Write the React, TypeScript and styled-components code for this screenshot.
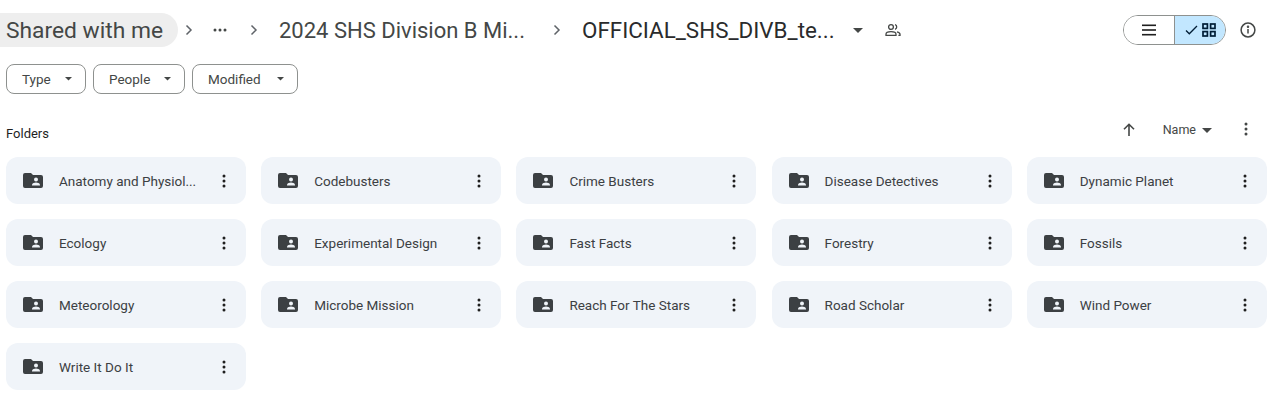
import React from "react";
import styled, { createGlobalStyle } from "styled-components";

const Global = createGlobalStyle`
  html, body { margin: 0; padding: 0; background: #fff; }
  body { font-family: Roboto, "Liberation Sans", sans-serif; overflow: hidden; }
`;

const Page = styled.div`
  width: 1280px;
  height: 414px;
  padding: 13px 13px 0 6px;
  box-sizing: border-box;
  display: flex;
  flex-direction: column;
`;

const Header = styled.div`
  display: flex;
  align-items: center;
  height: 34px;
`;

const Crumb = styled.div<{ $w: number; $size: number; $dark?: boolean; $ml?: number }>`
  width: ${(p) => p.$w}px;
  margin-left: ${(p) => p.$ml ?? 0}px;
  font-size: ${(p) => p.$size}px;
  line-height: 35px;
  height: 34px;
  white-space: nowrap;
  color: ${(p) => (p.$dark ? "#2a2b2c" : "#444746")};
`;

const RootCrumb = styled.div`
  margin-left: -6px;
  width: 178px;
  height: 34px;
  box-sizing: border-box;
  padding-left: 6px;
  border-radius: 0 17px 17px 0;
  background: #eeeeee;
  font-size: 22.8px;
  line-height: 35px;
  color: #444746;
  white-space: nowrap;
`;

const IconSlot = styled.span<{ $ml: number }>`
  display: inline-flex;
  margin-left: ${(p) => p.$ml}px;
  color: #444746;
`;

const ChevronSlot = styled(IconSlot)`
  color: #5f6368;
`;

const Toggle = styled.div`
  margin-left: auto;
  margin-right: 14px;
  display: flex;
  width: 103px;
  height: 30px;
  box-sizing: border-box;
  border: 1px solid #8e918f;
  border-radius: 15px;
  overflow: hidden;
`;

const ToggleSide = styled.div<{ $on?: boolean }>`
  flex: ${(p) => (p.$on ? "0 0 50px" : "1")};
  display: flex;
  align-items: center;
  justify-content: center;
  gap: 4px;
  background: ${(p) => (p.$on ? "#c2e7ff" : "#fff")};
  border-left: ${(p) => (p.$on ? "1px solid #8e918f" : "none")};
  color: ${(p) => (p.$on ? "#001d35" : "#1f1f1f")};
`;

const Filters = styled.div`
  display: flex;
  gap: 7px;
  margin-top: 17px;
`;

const Filter = styled.div<{ $w: number }>`
  width: ${(p) => p.$w}px;
  height: 30px;
  box-sizing: border-box;
  border: 1px solid #8e918f;
  border-radius: 8px;
  display: flex;
  align-items: center;
  justify-content: space-between;
  padding: 0 13px 0 15px;
  font-size: 13.5px;
  color: #444746;
`;

const SectionRow = styled.div`
  display: flex;
  align-items: center;
  height: 30px;
  margin-top: 24px;
  font-size: 13px;
  color: #1f1f1f;
`;

const SortGroup = styled.div`
  margin-left: auto;
  margin-bottom: 8px;
  display: flex;
  align-items: center;
  color: #444746;
  font-size: 12.5px;
`;

const SortName = styled.span`
  margin-left: 28px;
  color: #444746;
`;

const SortCaret = styled(IconSlot)`
  margin-top: 2px;
`;

const Grid = styled.div`
  display: grid;
  grid-template-columns: repeat(5, 240px);
  column-gap: 15.2px;
  row-gap: 15px;
  margin-top: 9px;
`;

const Card = styled.div`
  height: 47px;
  box-sizing: border-box;
  background: #f0f4f9;
  border-radius: 12px;
  display: flex;
  align-items: center;
  padding-left: 17px;
  color: #1f1f1f;
`;

const CardLabel = styled.span`
  margin-left: 16px;
  font-size: 13.5px;
  color: #3c4043;
  white-space: nowrap;
  flex: 1;
`;

const MoreWrap = styled.span`
  display: inline-flex;
  margin-right: 14px;
  color: #1f1f1f;
`;

const Chevron = () => (
  <svg width="12" height="14" viewBox="0 0 12 14" fill="none" stroke="currentColor" strokeWidth="1.5">
    <path d="M3.5 2.5 8 7l-4.5 4.5" />
  </svg>
);

const Caret = ({ size = 10 }: { size?: number }) => (
  <svg width={size} height={size / 2} viewBox="0 0 10 5" fill="currentColor">
    <path d="M0 0h10L5 5z" />
  </svg>
);

const Dots = ({ horizontal }: { horizontal?: boolean }) => (
  <svg width="16" height="16" viewBox="0 0 16 16" fill="currentColor">
    {horizontal ? (
      <>
        <circle cx="3" cy="8" r="1.5" />
        <circle cx="8" cy="8" r="1.5" />
        <circle cx="13" cy="8" r="1.5" />
      </>
    ) : (
      <>
        <circle cx="8" cy="3" r="1.5" />
        <circle cx="8" cy="8" r="1.5" />
        <circle cx="8" cy="13" r="1.5" />
      </>
    )}
  </svg>
);

const SharedFolder = () => (
  <svg width="20" height="15" viewBox="0 0 20 15" style={{ flex: "none" }}>
    <path
      fill="#3c4043"
      d="M2 0h6l2 2h8a2 2 0 0 1 2 2v9a2 2 0 0 1-2 2H2a2 2 0 0 1-2-2V2a2 2 0 0 1 2-2z"
    />
    <circle cx="13" cy="6.5" r="2" fill="#f0f4f9" />
    <path fill="#f0f4f9" d="M9 12c0-1.6 2.6-2.4 4-2.4s4 .8 4 2.4v.5H9z" />
  </svg>
);

const PeopleIcon = () => (
  <svg width="16" height="14" viewBox="0 0 16 14" fill="none" stroke="currentColor" strokeWidth="1.3">
    <circle cx="6" cy="4" r="2.4" />
    <path d="M1 12.3v-1c0-1.6 2.6-2.6 5-2.6s5 1 5 2.6v1z" />
    <path d="M10 1.7a2.4 2.4 0 0 1 0 4.6M12 8.9c1.6.4 3 1.2 3 2.4v1h-1.6" />
  </svg>
);

const InfoIcon = () => (
  <svg width="16" height="16" viewBox="0 0 16 16" fill="none" stroke="currentColor" strokeWidth="1.5">
    <circle cx="8" cy="8" r="6.9" />
    <path d="M8 7v4.6" />
    <circle cx="8" cy="4.8" r="0.5" fill="currentColor" />
  </svg>
);

const ListIcon = () => (
  <svg width="14" height="12" viewBox="0 0 14 12" fill="currentColor">
    <rect y="0.5" width="14" height="1.6" />
    <rect y="5.2" width="14" height="1.6" />
    <rect y="9.9" width="14" height="1.6" />
  </svg>
);

const CheckIcon = () => (
  <svg width="13" height="10" viewBox="0 0 13 10" fill="none" stroke="currentColor" strokeWidth="1.3">
    <path d="M1 5.5 4.3 8.8 12 1" />
  </svg>
);

const GridIcon = () => (
  <svg width="14" height="14" viewBox="0 0 14 14" fill="none" stroke="currentColor" strokeWidth="1.7">
    <rect x="1" y="1" width="4.4" height="4.4" />
    <rect x="8.6" y="1" width="4.4" height="4.4" />
    <rect x="1" y="8.6" width="4.4" height="4.4" />
    <rect x="8.6" y="8.6" width="4.4" height="4.4" />
  </svg>
);

const ArrowUp = () => (
  <svg width="12" height="13" viewBox="0 0 12 13" fill="none" stroke="currentColor" strokeWidth="1.6">
    <path d="M6 13V1.5M1 6.3l5-5 5 5" />
  </svg>
);

const folders = [
  "Anatomy and Physiol...",
  "Codebusters",
  "Crime Busters",
  "Disease Detectives",
  "Dynamic Planet",
  "Ecology",
  "Experimental Design",
  "Fast Facts",
  "Forestry",
  "Fossils",
  "Meteorology",
  "Microbe Mission",
  "Reach For The Stars",
  "Road Scholar",
  "Wind Power",
  "Write It Do It",
];

export default function App() {
  return (
    <Page>
      <Global />
      <Header>
        <RootCrumb>Shared with me</RootCrumb>
        <ChevronSlot $ml={5}><Chevron /></ChevronSlot>
        <IconSlot $ml={17}><Dots horizontal /></IconSlot>
        <ChevronSlot $ml={20}><Chevron /></ChevronSlot>
        <Crumb $w={260} $size={22} $ml={19}>2024 SHS Division B Mi...</Crumb>
        <ChevronSlot $ml={12}><Chevron /></ChevronSlot>
        <Crumb $w={266} $size={22.4} $ml={19} $dark>OFFICIAL_SHS_DIVB_te...</Crumb>
        <IconSlot $ml={5}><Caret /></IconSlot>
        <IconSlot $ml={22}><PeopleIcon /></IconSlot>
        <Toggle>
          <ToggleSide><ListIcon /></ToggleSide>
          <ToggleSide $on><CheckIcon /><GridIcon /></ToggleSide>
        </Toggle>
        <IconSlot $ml={0}><InfoIcon /></IconSlot>
        <IconSlot $ml={11} />
      </Header>
      <Filters>
        <Filter $w={80}>Type <Caret size={7} /></Filter>
        <Filter $w={92}>People <Caret size={7} /></Filter>
        <Filter $w={106}>Modified <Caret size={7} /></Filter>
      </Filters>
      <SectionRow>
        Folders
        <SortGroup>
          <ArrowUp />
          <SortName>Name</SortName>
          <SortCaret $ml={6}><Caret /></SortCaret>
          <IconSlot $ml={26}><Dots /></IconSlot>
          <IconSlot $ml={13} />
        </SortGroup>
      </SectionRow>
      <Grid>
        {folders.map((f) => (
          <Card key={f}>
            <SharedFolder />
            <CardLabel>{f}</CardLabel>
            <MoreWrap><Dots /></MoreWrap>
          </Card>
        ))}
      </Grid>
    </Page>
  );
}
